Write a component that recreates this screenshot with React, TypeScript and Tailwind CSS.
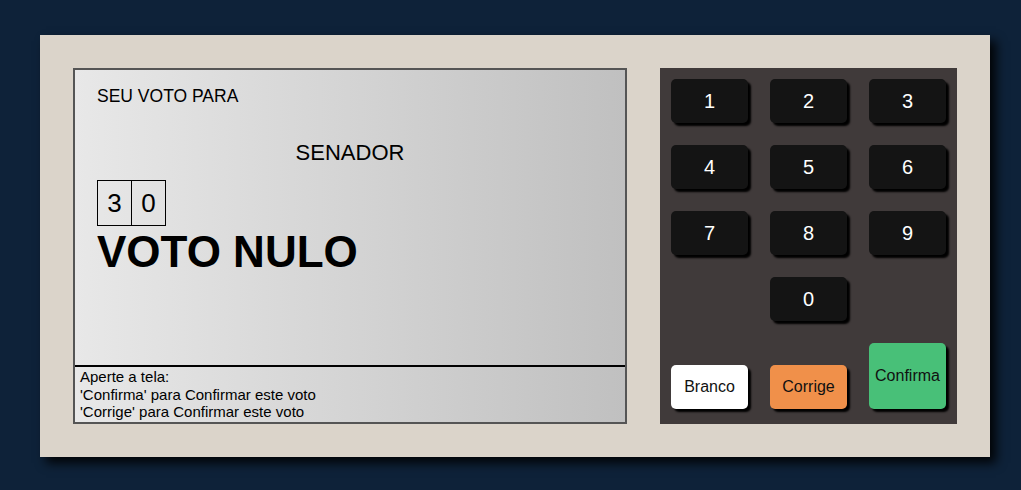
import React from "react";

const KEYS = ["1", "2", "3", "4", "5", "6", "7", "8", "9"];

const Key = ({ label }: { label: string }) => (
  <button className="justify-self-center w-[77px] h-[44px] rounded-[5px] bg-[#141414] text-white text-[20px] shadow-[3px_3px_2px_#000]">
    {label}
  </button>
);

export default function App() {
  return (
    <div className="w-full min-h-screen h-[490px] bg-[#0e2239] pt-[35px] pl-[40px] font-['Liberation_Sans',Arial,sans-serif]">
      <div className="w-[950px] h-[422px] bg-[#dbd4ca] p-[33px] flex gap-[33px] shadow-[6px_6px_10px_rgba(0,0,0,0.9)]">

        {/* Tela */}
        <div className="w-[554px] h-[356px] border-2 border-[#555555] bg-gradient-to-r from-[#e8e8e8] to-[#c0c0c0] flex flex-col text-black">
          <div className="h-[295px] shrink-0 px-[22px] flex flex-col">
            <p className="mt-[16px] text-[17.5px] leading-[normal]">SEU VOTO PARA</p>
            <p className="mt-[33px] text-[22px] leading-[normal] text-center">SENADOR</p>
            <div className="mt-[14px] flex">
              <div className="w-[35px] h-[46px] border border-black flex items-center justify-center text-[26px]">3</div>
              <div className="-ml-px w-[35px] h-[46px] border border-black flex items-center justify-center text-[26px]">0</div>
            </div>
            <p className="mt-[1px] text-[44px] font-bold leading-[normal]">VOTO NULO</p>
          </div>
          <div className="flex-1 border-t-2 border-black pl-[5px] pt-[1px] text-[15px] leading-[17.5px]">
            <p>Aperte a tela:</p>
            <p>'Confirma' para Confirmar este voto</p>
            <p>'Corrige' para Confirmar este voto</p>
          </div>
        </div>

        {/* Teclado */}
        <div className="w-[297px] h-[356px] bg-[#403a3a] pt-[11px] flex flex-col">
          <div className="grid grid-cols-3 gap-y-[22px]">
            {KEYS.map((k) => (
              <Key key={k} label={k} />
            ))}
            <div />
            <Key label="0" />
            <div />
          </div>
          <div className="mt-[22px] grid grid-cols-3 items-end h-[66px]">
            <button className="justify-self-center w-[77px] h-[44px] rounded-[5px] bg-white text-[#111] text-[16px] shadow-[3px_3px_2px_#000]">
              Branco
            </button>
            <button className="justify-self-center w-[77px] h-[44px] rounded-[5px] bg-[#f0904a] text-[#111] text-[16px] shadow-[3px_3px_2px_#000]">
              Corrige
            </button>
            <button className="justify-self-center w-[77px] h-[66px] rounded-[5px] bg-[#48c078] text-[#111] text-[16px] shadow-[3px_3px_2px_#000]">
              Confirma
            </button>
          </div>
        </div>

      </div>
    </div>
  );
}
